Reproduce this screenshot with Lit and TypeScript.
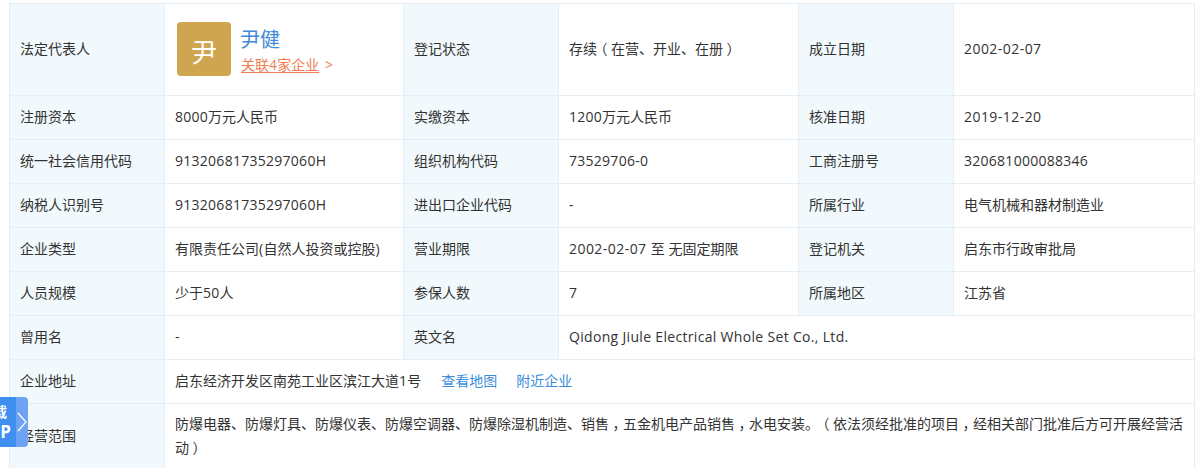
import { LitElement, html, css } from "lit";
import { customElement } from "lit/decorators.js";

const rows: string[][] = [
  ["注册资本", "8000万元人民币", "实缴资本", "1200万元人民币", "核准日期", "2019-12-20"],
  ["统一社会信用代码", "91320681735297060H", "组织机构代码", "73529706-0", "工商注册号", "320681000088346"],
  ["纳税人识别号", "91320681735297060H", "进出口企业代码", "-", "所属行业", "电气机械和器材制造业"],
  ["企业类型", "有限责任公司(自然人投资或控股)", "营业期限", "2002-02-07 至 无固定期限", "登记机关", "启东市行政审批局"],
  ["人员规模", "少于50人", "参保人数", "7", "所属地区", "江苏省"],
];

/* Latin runs are set slightly wider than the CJK around them; full-width
   brackets and commas sit centred in their em box. */
const t = (s: string) =>
  s.split(/([\x20-\x7e]+|[（），])/).map((p, i) => {
    if (i % 2 === 0) return p;
    if ("（），".includes(p)) return html`<span class="punct">${p}</span>`;
    const cls = /^\d{4}-\d\d-\d\d/.test(p) ? "date" : p.length > 30 ? "long" : "lat";
    return html`<span class=${cls}>${p}</span>`;
  });

@customElement("app-root")
export class AppRoot extends LitElement {
  static styles = css`
    :host {
      display: block;
      width: 1204px;
      height: 468px;
      overflow: hidden;
      position: relative;
      background: #fff;
      font-family: "Open Sans", "Noto Sans CJK SC", sans-serif;
      font-size: 14px;
      color: #333;
    }
    .wrap { padding: 3px 10px 0 9px; }
    table {
      width: 1185px;
      table-layout: fixed;
      border-collapse: collapse;
      line-height: 24px;
    }
    td {
      border: 1px solid #e4eef6;
      padding: 8px 10px 10px;
      box-sizing: border-box;
      vertical-align: middle;
    }
    tr { height: 44px; }
    tr.first { height: 92px; }
    tr.last { height: 65px; }
    tr.last td { padding-top: 8px; padding-bottom: 8px; }
    .l { background: #f2f9fc; }
    .lat { letter-spacing: 0.27px; }
    .long { letter-spacing: 0.32px; }
    .date { letter-spacing: 0.45px; }
    .punct {
      display: inline-block; width: 14px; text-align: center;
      font-feature-settings: "halt";
    }
    .rep { display: flex; align-items: center; gap: 9px; margin-left: 2px; }
    .avatar {
      width: 54px; height: 54px; border-radius: 4px;
      background: #d0a54f; color: #fff; font-size: 26px; line-height: 60px;
      text-align: center; flex: none;
    }
    .who { padding-top: 5px; }
    .name { color: #3d8bd6; font-size: 20px; line-height: 26px; }
    .rel { color: #ee7d51; line-height: 20px; margin: 2px 0 0 1px; }
    .rel u { text-underline-offset: 2px; text-decoration-thickness: 1px; }
    .rel span.gt { margin-left: 2px; }
    a { color: #3a8ddc; margin-left: 20px; }
    a + a { margin-left: 19px; }
    .fab {
      position: absolute; left: 0; top: 397px; width: 28px; height: 50px;
      display: flex; border-radius: 0 4px 4px 0; overflow: hidden;
      color: #fff; font-weight: 700; line-height: 20px;
    }
    .fab-text {
      width: 16px; background: #3e8ff0; overflow: hidden; flex: none;
      display: flex; flex-direction: column; align-items: flex-end; justify-content: center;
      white-space: nowrap;
    }
    .fab-cn { margin-right: 9px; font-size: 14px; }
    .fab-en { margin-right: 5px; font-size: 17px; }
    .fab-arrow {
      width: 12px; background: #6ea3f3; flex: none;
      display: flex; align-items: center; justify-content: center;
    }
  `;

  render() {
    return html`
      <div class="wrap">
        <table>
          <colgroup>
            <col style="width:155px" /><col style="width:239px" /><col style="width:155px" />
            <col style="width:240px" /><col style="width:155px" /><col style="width:241px" />
          </colgroup>
          <tr class="first">
            <td class="l">法定代表人</td>
            <td>
              <div class="rep">
                <div class="avatar">尹</div>
                <div class="who">
                  <div class="name">尹健</div>
                  <div class="rel"><u>关联<span class="lat">4</span>家企业</u> <span class="gt">&gt;</span></div>
                </div>
              </div>
            </td>
            <td class="l">登记状态</td>
            <td>${t("存续（在营、开业、在册）")}</td>
            <td class="l">成立日期</td>
            <td>${t("2002-02-07")}</td>
          </tr>
          ${rows.map(
            (r) => html`<tr>
              ${r.map((c, i) => html`<td class=${i % 2 ? "" : "l"}>${t(c)}</td>`)}
            </tr>`
          )}
          <tr>
            <td class="l">曾用名</td>
            <td>-</td>
            <td class="l">英文名</td>
            <td colspan="3">${t("Qidong Jiule Electrical Whole Set Co., Ltd.")}</td>
          </tr>
          <tr>
            <td class="l">企业地址</td>
            <td colspan="5">启东经济开发区南苑工业区滨江大道<span class="lat">1</span>号<a>查看地图</a><a>附近企业</a></td>
          </tr>
          <tr class="last">
            <td class="l">经营范围</td>
            <td colspan="5">${t("防爆电器、防爆灯具、防爆仪表、防爆空调器、防爆除湿机制造、销售，五金机电产品销售，水电安装。（依法须经批准的项目，经相关部门批准后方可开展经营活动）")}</td>
          </tr>
        </table>
      </div>
      <div class="fab">
        <div class="fab-text"><div class="fab-cn">下载</div><div class="fab-en">APP</div></div>
        <div class="fab-arrow">
          <svg width="10" height="20" viewBox="0 0 10 20" fill="none" stroke="#fff" stroke-width="1.2"><path d="M1 1l8 9-8 9" /></svg>
        </div>
      </div>
    `;
  }
}
